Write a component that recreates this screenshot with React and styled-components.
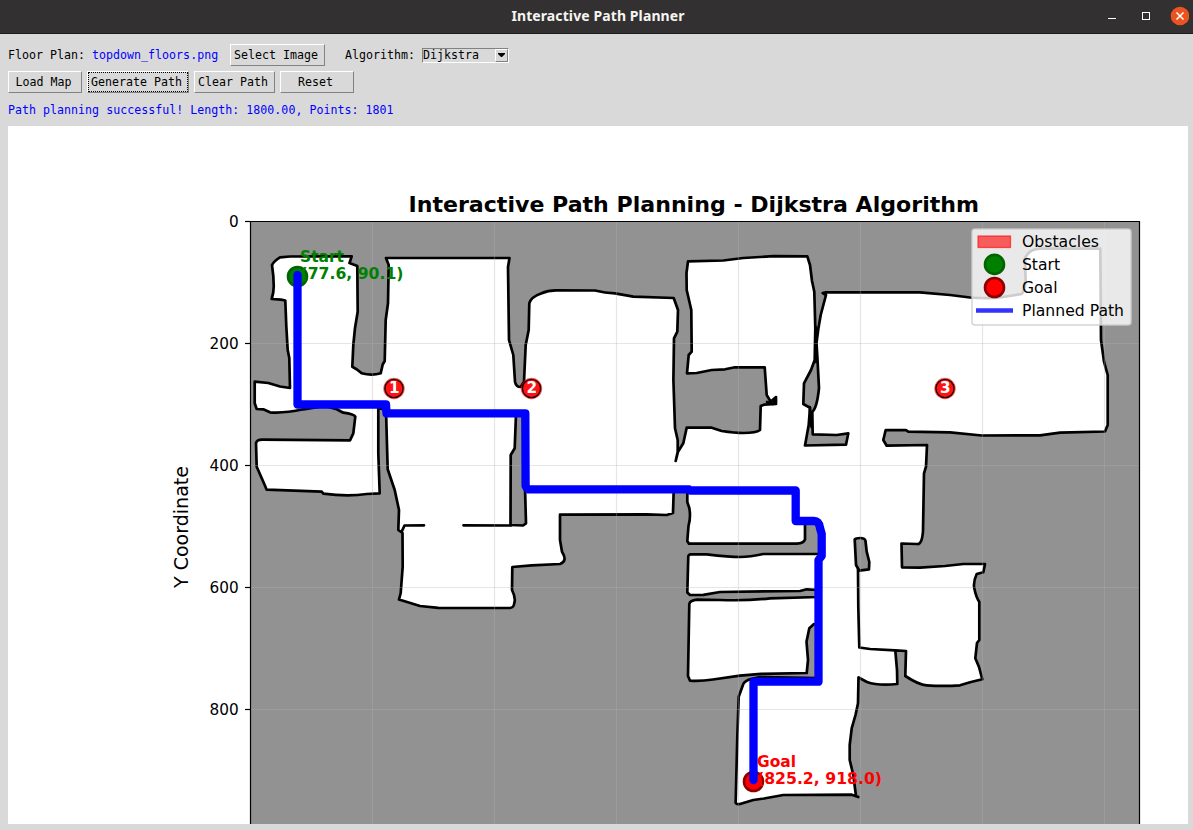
import React from "react";
import styled, { createGlobalStyle, css } from "styled-components";

const GlobalStyle = createGlobalStyle`
  * { box-sizing: border-box; }
  body { margin: 0; background: #d9d9d9; overflow: hidden; }
`;

const Window = styled.div`
  width: 1193px;
  height: 830px;
  display: flex;
  flex-direction: column;
  background: #d9d9d9;
  color: #000;
  font-family: "DejaVu Sans Mono", "Liberation Mono", monospace;
  font-size: 11.627px;
  letter-spacing: 0.02px;
  line-height: 14px;
  white-space: pre;
`;

const TitleBar = styled.header`
  height: 34px;
  flex: none;
  display: grid;
  grid-template-columns: 1fr auto 1fr;
  align-items: center;
  padding: 0 4px 2px 7px;
  background: #333031;
  border-bottom: 1px solid #1e1b1d;
`;

const WindowTitle = styled.h1`
  grid-column: 2;
  margin: 0;
  color: #f6f5f1;
  font: bold 14px/20px "Noto Sans", "Open Sans", sans-serif;
  letter-spacing: 0.1px;
`;

const WindowControls = styled.div`
  display: flex;
  justify-content: flex-end;
`;

const Controls = styled.section`
  flex: none;
  height: 92px;
  padding: 10px 8px 0;
`;

const ControlRow = styled.div`
  display: flex;
  align-items: center;
  height: 22px;
  margin-bottom: 5px;
`;

const Label = styled.span`
  width: ${(p) => p.$width}px;
  flex: none;
  color: ${(p) => (p.$accent ? "#0000ff" : "#000")};
`;

const Button = styled.button`
  width: ${(p) => p.$width}px;
  height: 22px;
  margin: 0 ${(p) => p.$gap || 5}px 0 0;
  padding: 0 3px 0 0;
  flex: none;
  color: #000;
  background: #d9d9d9;
  border: 1px solid;
  border-color: #fff #828282 #828282 #fff;
  font: inherit;
  letter-spacing: inherit;
  ${(p) =>
    p.$focused &&
    css`
      outline: 1px dotted #000;
      outline-offset: -2px;
    `}
`;

const Combo = styled.div`
  display: flex;
  align-items: center;
  justify-content: space-between;
  width: 87px;
  height: 15px;
  padding-left: 0;
  border: 1px solid;
  border-color: #828282 #fff #fff #828282;
`;

const ComboArrow = styled.span`
  display: flex;
  align-items: center;
  justify-content: center;
  width: 13px;
  height: 13px;
  border: 1px solid;
  border-color: #fff #828282 #828282 #fff;
`;

const Status = styled.p`
  margin: 0;
  padding-top: 5px;
  color: #0000ff;
`;

const Canvas = styled.main`
  flex: none;
  width: 1180px;
  height: 698px;
  margin-left: 8px;
  background: #fff;
`;

const Figure = styled.svg`
  display: block;
  font-family: "DejaVu Sans", sans-serif;
  font-size: 15.28px;
  letter-spacing: 0;
`;

const Wall = styled.path`
  stroke: #000;
  stroke-width: 2.7;
  stroke-linejoin: round;
  stroke-linecap: round;
  fill: ${(p) => p.$fill || "none"};
`;

const Annotation = styled.text`
  font-weight: bold;
  fill: ${(p) => p.$color};
`;

const OUTLINE =
  "M290 388 L289.3 358 L287.7 350 L286.3 326 L285.3 300.5 L281 299.7 L271.7 299 Q274 292 273.7 285 L273.3 276 L272 265 Q274 261 280 257.3 L290 256.5 L351.7 256.3 L349.5 263 L357.3 266 L357.7 311.7 L355 328 L353.3 345 L352.3 366.7 Q357 369 361.7 373.3 Q372 376 380.7 373.3 L382.7 364.5 L384.7 361 L385.7 320 L388 303.3 L388.7 265 L386 258 L509.5 258 L508 267 L509 340 L513.3 355 L515 381.7 Q516 387 520.7 387 L524 381.7 L525.7 345 L528.7 330 L529.3 303.3 Q531 297 541 293.5 Q548 290.3 556 290.3 L595 290.5 Q605 293 615 293.3 L633.3 296.7 L673.7 298 L678 310 L677.3 331.7 L674 338.3 L673.4 380 L675 428.3 L677.7 440 L677.7 451.7 L675.7 461 L678 451.7 L683.3 443.3 L686.7 427.7 L711.7 427.7 L721.7 431 Q735 433 743.3 433 Q756 433 760 430 L760.7 406 L764 404.7 L776 404 L776 397 L770.7 401.7 L766.7 395 L764.7 367.3 L735 367.3 L725 369.3 L711.7 370 L696.7 373 L687 373.3 L688.7 355 L691.7 351.7 L691.3 310 L686.7 290 L686.5 273 L688 261.3 L723.3 260.5 L743.3 258 L773.3 256.2 L807.3 256.3 L810 265 L812 281 L814.3 291.7 L815.3 328.3 L814.7 360 L811 370 L804 383.3 L803.3 404 L810 407.7 L808.7 425 L805 445.5 L846 444.7 L848.3 433.3 L836.7 435 L812.7 434.3 L812.3 411.7 Q817 408 819 388 L817.3 356 L816.5 343 L818.3 329 L820.7 315 L826 295 L822.7 293 L826 292.3 L920 292.3 L950 295 L970 297.5 Q993 299 1003 297 L1021.7 294 Q1024 292 1025.7 282 L1025 258.3 Q1029 249 1040 248.7 L1100.3 248.7 L1101 340 L1104 361.7 L1107.7 375 L1107.7 425 L1105 431.5 L1060 432.7 L1040 435.3 L981.7 435.5 L950 432.3 L908.3 431.7 L906 430.2 L885.7 430 L883.3 440 L886.7 445.7 L927 445 L926 466.7 L924 473.3 L923 531 Q922 545 917 544 L901.5 543.5 L902 567.3 L920 567.7 L945 566 L963.3 564 L985 564 L983.3 572.3 L976.7 574 Q973 582 974.3 588.3 Q976 597 979.3 602 L979.3 640 L977 643 L975.3 658.3 L979 667 L982.3 679.3 L970 682.3 L960 685.3 Q943 686.5 926.7 685.3 Q919 685 905.3 676 L906 651 L895.3 650.3 L897 670 L897.3 684 Q878 686 867 682 L858.5 677.5 L858 703.3 L855.5 715 L851.7 728.3 L849.7 745 L849.7 760 L853.3 775 L856 796 L858.3 797 L851.7 794.7 L783.3 795 L764 798.5 L753.3 800 L740 804 Q735 805 735.7 801 L737.3 736.7 L738.7 696.7 L743.3 684 Q745 680.5 751.7 678.7 L760 677 L818 678 L818 624 L814 624 L809.3 628.3 L806.5 641.7 L808 660 L806.7 673 L761 673.8 L740 675.7 L713 679.5 Q700 681.5 690 680.7 L688 676 L689.3 604 Q690 600.5 697 599.7 L720 600 Q748 601 770 598.3 L818 597 L818 590 L806.7 589.3 L800 591 L720 592 L703.3 594.8 L690 595 L687.3 592.5 L688.3 556 L690 554.3 L706.7 554.3 Q730 557 740 557 Q750 557 763.3 554 L821 554 L821 523 L805 523 L805 539.3 Q804 543 796.7 543.7 L689 543.7 L687.3 541 L688.5 526 Q691 517 689.3 508 L687.3 502 L687.3 490 L673.7 490 L673 513 L666.7 515 L646.7 514.3 L560 514.7 L560 540 L562 551.7 Q568 561 560 564 L531.7 565.3 L512.3 567 L512 590 Q516 598 514.3 603 Q514 607.5 510 608 L438.3 607.8 L420 606 L399 599.5 L400.7 593 L402.7 566.7 L402.5 533 L398.3 530 L399 510 L394.7 490 L387.7 469.3 L386 410 L378.3 408 L378.3 453.3 L379.7 493.3 L366.7 494 Q348 497 323.3 493.7 L321.7 491.7 L266.7 489.7 L263.3 481.7 L256.7 466.7 L256 443 Q257 439.7 262 439.7 L350 440.3 L353.3 433.3 L355.3 416.7 Q354 414 343.3 412.7 L336.7 409.3 L325 406 L303.3 409.3 Q283 413.5 270 412.3 L263.3 409.3 L256.7 409 L254.7 403.3 L254.7 381.7 L268.3 383 L280 386.5 Z";

const ISLANDS = [
  "M516 414 L514.7 448.3 L510.7 455 L510.5 525 L523 525.5 L526 523.3 L525 487 L525 414 Z",
  "M854.7 539.5 Q856 538 860 538 Q865 538 865.5 541 L866.7 551.7 L869.3 562 L869 569.3 L859.3 570.7 L856 565 Z",
];

const PARTITIONS = [
  "M402 531 L404.5 525.5 L424 525.3",
  "M463.5 525.3 L511 525.5",
  "M858 569 L858.3 606.7 L859.3 647.5 L870 649 L895.3 650.3",
  "M815.8 327 L815.6 362",
  "M809.8 407 L811.5 427",
  "M767 402 L773 404 L775.5 399",
];

const ROUTE =
  "M297.5 275 V404.5 H386 L386.5 413.3 H525.3 L525.6 486 L527.5 489.3 H689 L690 490.5 H795.7 V521 H814 Q819 521 820 528 L821.7 534 V556 L818.5 560 V681.7 H753.5 V780";

const STOPS = [
  { n: 1, x: 394 },
  { n: 2, x: 531.5 },
  { n: 3, x: 945 },
];
const GRID_X = [372.5, 494.5, 616.5, 738.5, 860.5, 982.5, 1104.5];
const TICKS = [
  { value: 0, y: 221.5 },
  { value: 200, y: 343.5 },
  { value: 400, y: 465.5 },
  { value: 600, y: 587.5 },
  { value: 800, y: 709.5 },
];

function Marker({ x, y, fill, edge }) {
  return <circle cx={x} cy={y} r="9.5" fill={fill} stroke={edge} strokeWidth="2.6" />;
}

function Legend() {
  return (
    <g>
      <rect x="972" y="229" width="159" height="96" rx="3" fill="#fff" fillOpacity="0.8" stroke="#ccc" strokeOpacity="0.85" strokeWidth="1.5" />
      <rect x="978" y="236" width="32.5" height="11.5" fill="#f00" fillOpacity="0.6" stroke="#f00" strokeOpacity="0.6" strokeWidth="1.3" />
      <Marker x={994.5} y={264.4} fill="#008000" edge="#006400" />
      <Marker x={994.5} y={287.5} fill="#f00" edge="#8b0000" />
      <path d="M976 310.5 H1013" stroke="#33f" strokeWidth="4.6" />
      <text x="1022" y="247" textLength="77" lengthAdjust="spacingAndGlyphs">Obstacles</text>
      <text x="1022" y="270" textLength="38" lengthAdjust="spacingAndGlyphs">Start</text>
      <text x="1022" y="293" textLength="35.5" lengthAdjust="spacingAndGlyphs">Goal</text>
      <text x="1022" y="316" textLength="102" lengthAdjust="spacingAndGlyphs">Planned Path</text>
    </g>
  );
}

function PathPlot() {
  return (
    <Figure width="1180" height="698" viewBox="8 126 1180 698">
      <rect x="250" y="221" width="890" height="620" fill="#929292" />
      <Wall d={OUTLINE} $fill="#fff" />
      {ISLANDS.map((d) => <Wall key={d} d={d} $fill="#929292" />)}
      {PARTITIONS.map((d) => <Wall key={d} d={d} />)}

      <g stroke="#b0b0b0" strokeOpacity="0.32" strokeWidth="1.2">
        {GRID_X.map((x) => <path key={x} d={`M${x} 222 V840`} />)}
        {TICKS.slice(1).map((t) => <path key={t.y} d={`M251 ${t.y} H1139`} />)}
      </g>

      {STOPS.map(({ n, x }) => (
        <g key={n}>
          <circle cx={x} cy="388.5" r="10.7" fill="#f00" fillOpacity="0.65" />
          <circle cx={x} cy="388.5" r="9.1" fill="#ff1212" stroke="#200" strokeWidth="1.4" />
          <text x={x + 0.2} y="393" textAnchor="middle" fontSize="15.2" fontWeight="bold" fill="#fff">{n}</text>
        </g>
      ))}

      <Marker x={297.5} y={276.5} fill="#008000" edge="#006400" />
      <Marker x={753.5} y={781.5} fill="#f00" edge="#8b0000" />
      <Annotation x="300" y="262" textLength="44" lengthAdjust="spacingAndGlyphs" $color="#008000">Start</Annotation>
      <Annotation x="300.5" y="279" textLength="103" lengthAdjust="spacingAndGlyphs" $color="#008000">(77.6, 90.1)</Annotation>
      <Annotation x="757" y="767" textLength="39" lengthAdjust="spacingAndGlyphs" $color="#f00">Goal</Annotation>
      <Annotation x="757" y="784" textLength="125" lengthAdjust="spacingAndGlyphs" $color="#f00">(825.2, 918.0)</Annotation>
      <path d={ROUTE} fill="none" stroke="#00f" strokeWidth="8.3" strokeLinejoin="round" strokeLinecap="round" />

      <path d="M250.5 840 V221.5 H1139.5 V840" fill="none" stroke="#000" strokeWidth="1.2" />
      {TICKS.map((t) => (
        <g key={t.value}>
          <path d={`M245 ${t.y} H250`} stroke="#000" strokeWidth="1.2" />
          <text x="238.7" y={t.y + 5.5} textAnchor="end">{t.value}</text>
        </g>
      ))}
      <text transform="translate(188 588) rotate(-90)" fontSize="18.8" textLength="122" lengthAdjust="spacingAndGlyphs">Y Coordinate</text>
      <text x="408.5" y="212" fontSize="21.39" fontWeight="bold" textLength="570.5" lengthAdjust="spacingAndGlyphs">Interactive Path Planning - Dijkstra Algorithm</text>
      <Legend />
    </Figure>
  );
}

export default function App() {
  return (
    <>
      <GlobalStyle />
      <Window>
        <TitleBar>
          <WindowTitle>Interactive Path Planner</WindowTitle>
          <WindowControls>
            <svg width="84" height="24" viewBox="1105 3 84 24" fill="none" stroke="#fff">
              <path d="M1108 17.5 H1116" />
              <rect x="1142.5" y="11.5" width="7" height="7" />
              <circle cx="1180" cy="15" r="9.3" fill="#e95420" stroke="none" />
              <path d="M1176.5 11.5 L1183.5 18.5 M1183.5 11.5 L1176.5 18.5" strokeWidth="1.5" />
            </svg>
          </WindowControls>
        </TitleBar>
        <Controls>
          <ControlRow>
            <Label $width={84}>Floor Plan:</Label>
            <Label $width={138} $accent>topdown_floors.png</Label>
            <Button $width={95} $gap={20}>Select Image</Button>
            <Label $width={77}>Algorithm:</Label>
            <Combo>
              Dijkstra
              <ComboArrow>
                <svg width="7" height="4" viewBox="0 0 7 4"><path d="M0 0 H7 V1 L4 4 H3 L0 1 Z" /></svg>
              </ComboArrow>
            </Combo>
          </ControlRow>
          <ControlRow>
            <Button $width={74}>Load Map</Button>
            <Button $width={102} $focused>Generate Path</Button>
            <Button $width={81}>Clear Path</Button>
            <Button $width={74}>Reset</Button>
          </ControlRow>
          <Status>Path planning successful! Length: 1800.00, Points: 1801</Status>
        </Controls>
        <Canvas>
          <PathPlot />
        </Canvas>
      </Window>
    </>
  );
}
